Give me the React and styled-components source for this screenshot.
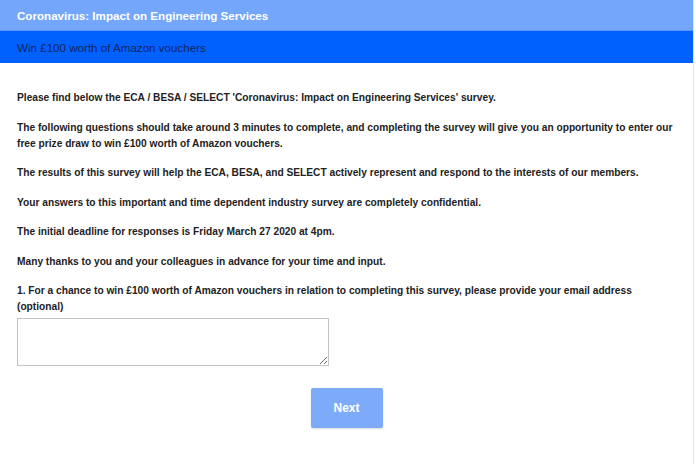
import styled, { createGlobalStyle } from 'styled-components'

const GlobalStyle = createGlobalStyle`
    html, body {
        margin: 0;
        padding: 0;
        background: #ffffff;
    }
    body {
        font-family: "Liberation Sans", Arial, sans-serif;
    }
`

const paragraphs = [
    "Please find below the ECA / BESA / SELECT 'Coronavirus: Impact on Engineering Services' survey.",
    "The following questions should take around 3 minutes to complete, and completing the survey will give you an opportunity to enter our free prize draw to win £100 worth of Amazon vouchers.",
    "The results of this survey will help the ECA, BESA, and SELECT actively represent and respond to the interests of our members.",
    "Your answers to this important and time dependent industry survey are completely confidential.",
    "The initial deadline for responses is Friday March 27 2020 at 4pm.",
    "Many thanks to you and your colleagues in advance for your time and input.",
]

const App = () => {
    return (
        <>
            <GlobalStyle />
            <Page>
                <TitleBar>Coronavirus: Impact on Engineering Services</TitleBar>
                <SubBar>Win £100 worth of Amazon vouchers</SubBar>
                <Body>
                    {paragraphs.map((p, i) => (
                        <Para key={i}>{p}</Para>
                    ))}
                    <Question>
                        1. For a chance to win £100 worth of Amazon vouchers in relation to completing this survey, please provide your email address (optional)
                    </Question>
                    <Answer />
                    <Actions>
                        <NextButton type="button">Next</NextButton>
                    </Actions>
                </Body>
            </Page>
        </>
    )
}

export default App

const Page = styled.div`
    width: 694px;
    min-height: 464px;
    border-right: 1px solid #e4e4e4;
    box-sizing: border-box;
`

const TitleBar = styled.div`
    height: 30px;
    background: #74a6fc;
    color: #ffffff;
    font-size: 11.6px;
    font-weight: bold;
    padding-left: 17px;
    display: flex;
    align-items: center;
`

const SubBar = styled.div`
    height: 32px;
    background: #0061fe;
    border-top: 1px solid #5d94f4;
    color: #13245a;
    font-size: 11.6px;
    padding-left: 17px;
    display: flex;
    align-items: center;
`

const Body = styled.div`
    padding: 27px 17px 0;
`

const Para = styled.p`
    margin: 0 0 13.5px;
    font-size: 10.2px;
    line-height: 16px;
    font-weight: bold;
    color: #222222;
`

const Question = styled(Para)`
    margin-bottom: 3px;
`

const Answer = styled.textarea`
    display: block;
    width: 312px;
    height: 48px;
    box-sizing: border-box;
    border: 1px solid #c4c4c4;
    margin: 0;
`

const Actions = styled.div`
    display: flex;
    justify-content: center;
    padding-top: 22px;
`

const NextButton = styled.button`
    width: 72px;
    height: 40px;
    border: none;
    border-radius: 2px;
    background: #7eaafa;
    color: #ffffff;
    font-family: "Liberation Sans", Arial, sans-serif;
    font-size: 12px;
    font-weight: bold;
    box-shadow: 0 1px 2px rgba(0, 0, 0, 0.15);
`
